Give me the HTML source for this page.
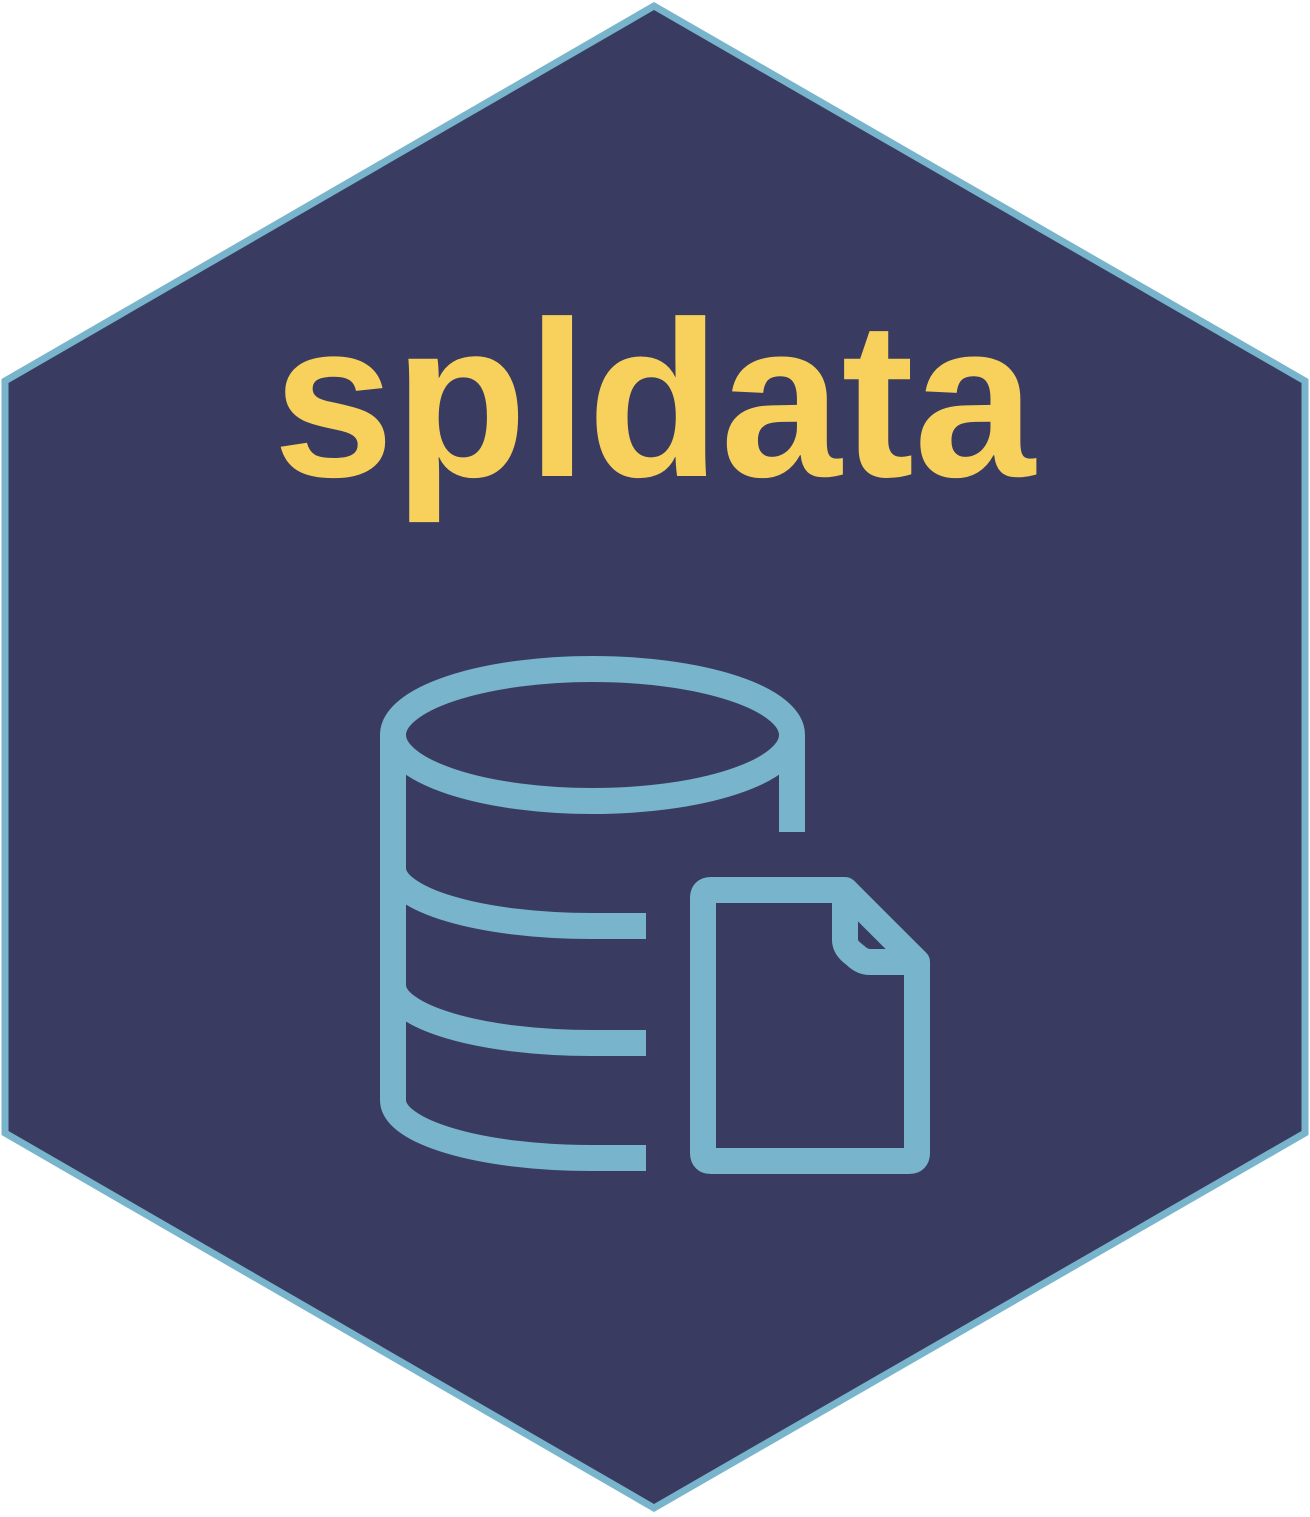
<!DOCTYPE html>
<html><head><meta charset="utf-8"><style>
html,body{margin:0;padding:0;background:#fff;}
svg{display:block;}
</style></head><body>
<svg width="1310" height="1517" viewBox="0 0 1310 1517" xmlns="http://www.w3.org/2000/svg">
<polygon points="654,6 1305,381 1305,1133 654,1508 5,1133 5,381" fill="#393c60" stroke="#78b4cc" stroke-width="7"/>
<text x="273" y="476" font-family="Liberation Sans, Arial, sans-serif" font-weight="bold" font-size="222" fill="#f8d05c" textLength="762" lengthAdjust="spacingAndGlyphs">spldata</text>
<g fill="none" stroke="#78b4cc" stroke-width="26">
<ellipse cx="592.5" cy="735" rx="199.5" ry="66"/>
<path d="M393 735 V1100"/>
<path d="M792 735 V832"/>
<path d="M393 868 C393 900 480 926 592 926 L646 926"/>
<path d="M393 985 C393 1017 480 1043 592 1043 L646 1043"/>
<path d="M393 1100 C393 1132 480 1158 592 1158 L646 1158"/>
<path d="M703 898 Q703 890 711 890 L845 890 L917 962 L917 1153 Q917 1161 909 1161 L711 1161 Q703 1161 703 1153 Z" stroke-linejoin="round"/>
<path d="M845 890 V940 Q845 948 855 955 Q862 962 870 962 H917" stroke-linejoin="round"/>
</g>
</svg>
</body></html>
